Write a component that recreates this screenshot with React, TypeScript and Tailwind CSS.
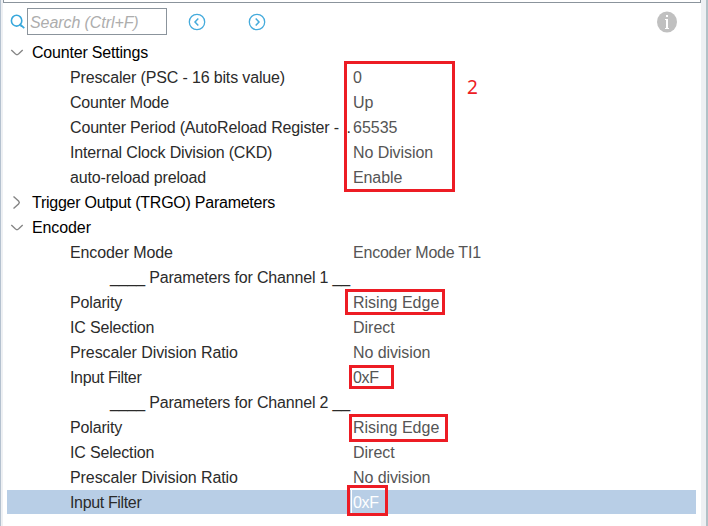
import React from "react";

type Row = {
  kind: "group" | "item" | "heading";
  label: string;
  tracking: string;
  value?: string;
  valueTracking?: string;
  open?: boolean;
  selected?: boolean;
  truncated?: boolean;
};

const rows: Row[] = [
  { kind: "group", label: "Counter Settings", tracking: "tracking-[-0.2px]", open: true },
  { kind: "item", label: "Prescaler (PSC - 16 bits value)", tracking: "tracking-[-0.15px]", value: "0" },
  { kind: "item", label: "Counter Mode", tracking: "tracking-[-0.2px]", value: "Up" },
  { kind: "item", label: "Counter Period (AutoReload Register -", tracking: "tracking-[-0.16px]", value: "65535", truncated: true },
  { kind: "item", label: "Internal Clock Division (CKD)", tracking: "tracking-[-0.17px]", value: "No Division", valueTracking: "tracking-[-0.08px]" },
  { kind: "item", label: "auto-reload preload", tracking: "tracking-[-0.14px]", value: "Enable", valueTracking: "tracking-[-0.1px]" },
  { kind: "group", label: "Trigger Output (TRGO) Parameters", tracking: "tracking-[-0.25px]", open: false },
  { kind: "group", label: "Encoder", tracking: "tracking-[-0.1px]", open: true },
  { kind: "item", label: "Encoder Mode", tracking: "tracking-[-0.1px]", value: "Encoder Mode TI1", valueTracking: "tracking-[-0.22px]" },
  { kind: "heading", label: "____ Parameters for Channel 1 __", tracking: "tracking-[-0.17px]" },
  { kind: "item", label: "Polarity", tracking: "tracking-[-0.15px]", value: "Rising Edge" },
  { kind: "item", label: "IC Selection", tracking: "tracking-[-0.17px]", value: "Direct" },
  { kind: "item", label: "Prescaler Division Ratio", tracking: "tracking-[-0.08px]", value: "No division", valueTracking: "tracking-[-0.08px]" },
  { kind: "item", label: "Input Filter", tracking: "tracking-[-0.35px]", value: "0xF", valueTracking: "tracking-[-0.3px]" },
  { kind: "heading", label: "____ Parameters for Channel 2 __", tracking: "tracking-[-0.17px]" },
  { kind: "item", label: "Polarity", tracking: "tracking-[-0.15px]", value: "Rising Edge" },
  { kind: "item", label: "IC Selection", tracking: "tracking-[-0.17px]", value: "Direct" },
  { kind: "item", label: "Prescaler Division Ratio", tracking: "tracking-[-0.08px]", value: "No division", valueTracking: "tracking-[-0.08px]" },
  { kind: "item", label: "Input Filter", tracking: "tracking-[-0.35px]", value: "0xF", valueTracking: "tracking-[-0.3px]", selected: true },
];

function Chevron({ open }: { open?: boolean }) {
  return (
    <svg width="14" height="14" viewBox="0 0 14 14" fill="none" stroke="#858585" strokeWidth="1.4" className="shrink-0">
      <path d={open ? "M1.3 4 L5.5 8 L7 8.8 L8.5 8 L12.7 4" : "M3.5 0.5 L8.5 5 L9.3 6.5 L8.5 8 L3.5 12.5"} />
    </svg>
  );
}

function NavButton({ dir }: { dir: "left" | "right" }) {
  return (
    <svg width="18" height="18" viewBox="0 0 18 18" fill="none" stroke="#45abdc" strokeWidth="1.3" className="shrink-0">
      <circle cx="9" cy="9" r="7.7" />
      <path strokeWidth="1.5" d={dir === "left" ? "M10.3 5.5 L7 9 L10.3 12.5" : "M7.7 5.5 L11 9 L7.7 12.5"} />
    </svg>
  );
}

function TreeRow({ row }: { row: Row }) {
  if (row.kind === "group") {
    return (
      <div className="flex h-[25px] items-center pl-[7px] text-black">
        <Chevron open={row.open} />
        <span className={`ml-[8px] ${row.tracking}`}>{row.label}</span>
      </div>
    );
  }
  if (row.kind === "heading") {
    return (
      <div className="flex h-[25px] items-center pl-[107px] text-[#2b2b2b]">
        <span className={row.tracking}>{row.label}</span>
      </div>
    );
  }
  return (
    <div className="h-[25px] pr-[5px] pl-[4px]">
      <div className={`flex h-[24px] items-center pl-[63px] text-[#2b2b2b] ${row.selected ? "bg-[#b8cee6]" : ""}`}>
        <div className="flex w-[281px] shrink-0 justify-between pt-[2px] pr-px">
          <span className={row.tracking}>{row.label}</span>
          {row.truncated && <span className="mr-[-1px]">.</span>}
        </div>
        <span
          className={`flex h-full items-center border-l pt-[2px] pl-[1px] ${row.valueTracking ?? ""} ${
            row.selected ? "border-white text-white" : "border-transparent text-[#555555]"
          }`}
        >
          {row.value}
        </span>
      </div>
    </div>
  );
}

export default function App() {
  return (
    <div className="relative flex h-[526px] w-[708px] overflow-hidden border-l border-[#b4c1cf] bg-white font-['Liberation_Sans',Arial,sans-serif] text-[16px] leading-[24px] whitespace-pre">
      <div className="w-[2px] shrink-0 bg-[#eef0f3]" />
      <main className="flex w-[698px] shrink-0 flex-col">
        <div className="h-[3px] shrink-0 border-x border-b border-[#8b949c]" />
        <div className="flex h-[37px] shrink-0 items-center pl-[7px]">
          <svg width="15" height="15" viewBox="0 0 15 15" fill="none" stroke="#38a8dc" className="shrink-0">
            <ellipse cx="6.6" cy="6.7" rx="5.2" ry="5.4" strokeWidth="1.6" />
            <path d="M9.6 10 L14.3 14.2 M10.5 12.2 H12.5" strokeWidth="1.7" />
          </svg>
          <div className="ml-[2px] flex h-[27px] w-[140px] items-center border border-[#8b949c] pt-[2px] pl-[2px] tracking-[-0.08px] text-[#adadad] italic">
            Search (Ctrl+F)
          </div>
          <div className="ml-[21px] flex gap-[42px]">
            <NavButton dir="left" />
            <NavButton dir="right" />
          </div>
          <svg width="20" height="22" viewBox="0 0 20 22" className="mr-[24px] ml-auto shrink-0">
            <ellipse cx="10" cy="11" rx="10" ry="10.5" fill="#c0c0c0" />
            <rect x="9" y="4" width="2" height="2" fill="white" />
            <path d="M8 8 H11 V17 H12 V18 H8 V17 H9 V9 H8 Z" fill="white" />
          </svg>
        </div>
        {rows.map((row, i) => (
          <TreeRow key={i} row={row} />
        ))}
      </main>
      <div className="w-[5px] shrink-0 bg-[#eef0f3]" />
      <div className="w-[2px] shrink-0 bg-[#b2c1c7]" />

      <div className="absolute top-[61px] left-[343px] h-[131px] w-[111px] border-3 border-[#ed1c24]" />
      <div className="absolute top-[289px] left-[344px] h-[26px] w-[100px] border-3 border-[#ed1c24]" />
      <div className="absolute top-[365px] left-[348px] h-[24px] w-[45px] border-3 border-[#ed1c24]" />
      <div className="absolute top-[414px] left-[348px] h-[28px] w-[99px] border-3 border-[#ed1c24]" />
      <div className="absolute top-[485px] left-[346px] h-[31px] w-[41px] border-3 border-[#ed1c24]" />
      <span className="absolute top-[75px] left-[466px] font-['Noto_Sans',sans-serif] text-[19px] text-[#ed1c24]">2</span>
    </div>
  );
}
